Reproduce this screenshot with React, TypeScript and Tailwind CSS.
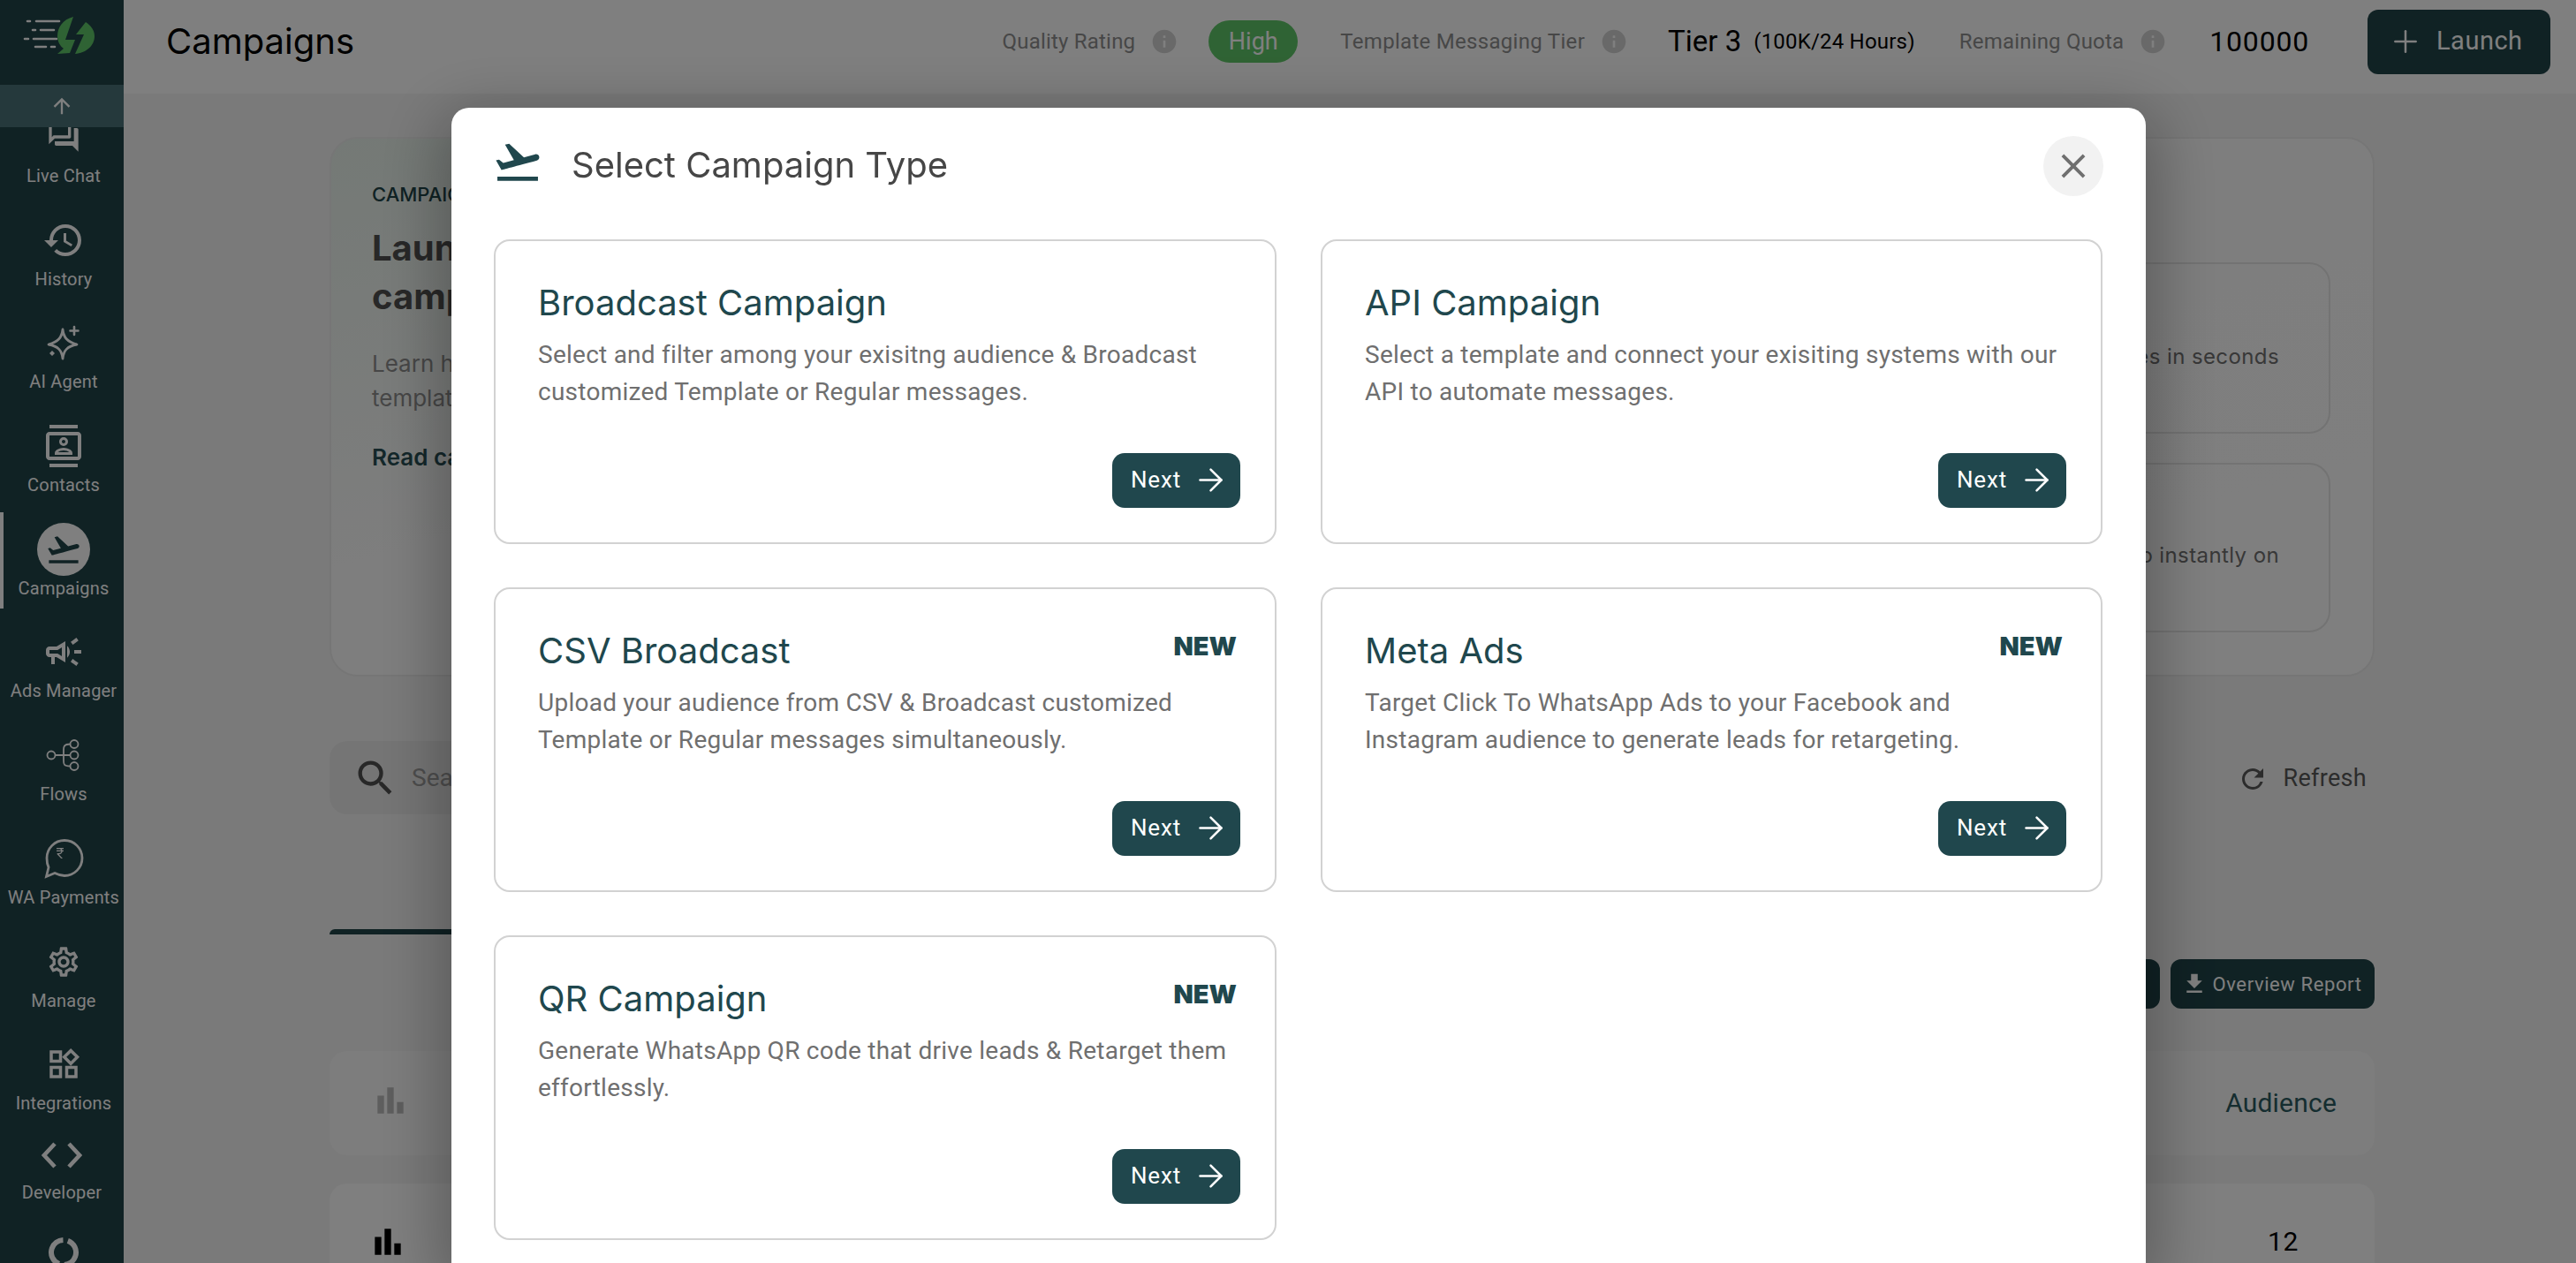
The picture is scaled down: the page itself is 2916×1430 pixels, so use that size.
import type { ReactNode } from 'react';
import { ArrowRight, Plus } from 'lucide-react';
import {
  MdArrowUpward,
  MdBarChart,
  MdClose,
  MdCurrencyRupee,
  MdFileDownload,
  MdFlightTakeoff,
  MdHistory,
  MdInfo,
  MdOutlineCampaign,
  MdOutlineContacts,
  MdOutlineForum,
  MdOutlineSettings,
  MdOutlineWidgets,
  MdRefresh,
  MdSearch,
} from 'react-icons/md';

const roboto = "font-['Roboto',sans-serif]";
const inter = "font-['Inter',sans-serif]";

function Logo() {
  return (
    <svg width="140" height="96" viewBox="0 0 140 96" fill="none" aria-hidden>
      <g stroke="#fff" strokeWidth="2.6" strokeLinecap="round">
        <path d="M31 24h3M41 24h26" />
        <path d="M37 34h3M46 34h15" />
        <path d="M28 44h4M38 44h26" />
        <path d="M40 53h12M58 53h4" />
      </g>
      <path
        d="M83 19C71 22 65 31 65 41C65 47 68 52 72 55L65 61L79 60L85 45L74 45Z"
        fill="#5fc768"
      />
      <path d="M97 25C103 29 107 34 107 41C107 52 97 60 85 61L95 39L86 39Z" fill="#5fc768" />
    </svg>
  );
}

function SparkIcon() {
  return (
    <svg width="40" height="40" viewBox="0 0 40 40" fill="none" aria-hidden>
      <path
        d="M19 5C20 14 24 19 35 22C24 24 20 29 19 38C18 29 14 24 3 22C14 19 18 14 19 5Z"
        stroke="#fff"
        strokeWidth="2.8"
        strokeLinejoin="round"
      />
      <path d="M32 2v9M27.5 6.5h9" stroke="#fff" strokeWidth="2.6" strokeLinecap="round" />
      <path d="M7 29l3 3-3 3-3-3z" fill="#fff" />
    </svg>
  );
}

function FlowIcon() {
  return (
    <svg width="40" height="40" viewBox="0 0 40 40" fill="none" stroke="#fff" strokeWidth="1.8" aria-hidden>
      <circle cx="6" cy="20" r="4.5" />
      <circle cx="32" cy="7.5" r="4.5" />
      <circle cx="32" cy="20" r="4.5" />
      <circle cx="32" cy="32.5" r="4.5" />
      <path d="M10.5 20H27.5M27.5 7.5C20 7.5 20 11 20 14V26C20 30 20 32.5 27.5 32.5" />
    </svg>
  );
}

function PaymentIcon() {
  return (
    <svg width="46" height="46" viewBox="0 0 46 46" fill="none" aria-hidden>
      <path
        d="M24 2.5C35 2.5 44 11.5 44 22.5C44 33.5 35 42.5 24 42.5C19.5 42.5 16 41 13 39.5L3.5 43.5L6 33C4.5 30 4 26.5 4 22.5C4 11.5 13 2.5 24 2.5Z"
        stroke="#fff"
        strokeWidth="2.8"
      />
      <MdCurrencyRupee x="11" y="9" width="26" height="26" color="#fff" />
    </svg>
  );
}

function CodeIcon() {
  return (
    <svg width="46" height="30" viewBox="0 0 46 30" fill="none" stroke="#fff" strokeWidth="4.6" aria-hidden>
      <path d="M15 2L3 15L15 28" />
      <path d="M31 2L43 15L31 28" />
    </svg>
  );
}

function RingIcon() {
  return (
    <svg width="36" height="36" viewBox="0 0 36 36" fill="none" aria-hidden>
      <circle cx="18" cy="18" r="14" stroke="#fff" strokeWidth="6" strokeDasharray="38 6 38 6" transform="rotate(-70 18 18)" />
    </svg>
  );
}

type NavEntry = {
  label?: string;
  icon: ReactNode;
  active?: boolean;
  box: string;
  slot?: string;
};

const navItems: NavEntry[] = [
  { label: 'Live Chat', icon: <MdOutlineForum size={40} />, box: 'h-[109px]' },
  { label: 'History', icon: <MdHistory size={48} />, box: 'h-[109px]' },
  { label: 'AI Agent', icon: <SparkIcon />, box: 'h-[109px]' },
  { label: 'Contacts', icon: <MdOutlineContacts size={48} />, box: 'h-[109px]' },
  {
    label: 'Campaigns',
    active: true,
    box: 'h-[109px]',
    icon: (
      <span className="flex h-[60px] w-[60px] items-center justify-center rounded-full bg-white text-[#204449]">
        <MdFlightTakeoff size={42} />
      </span>
    ),
  },
  { label: 'Ads Manager', icon: <MdOutlineCampaign size={48} />, box: 'h-[109px]' },
  { label: 'Flows', icon: <FlowIcon />, box: 'h-[109px]' },
  { label: 'WA Payments', icon: <PaymentIcon />, box: 'h-[109px]' },
  { label: 'Manage', icon: <MdOutlineSettings size={40} />, box: 'h-[109px]' },
  { label: 'Integrations', icon: <MdOutlineWidgets size={42} />, box: 'h-[109px]' },
  { label: 'Developer', icon: <CodeIcon />, box: 'h-[100px] -mt-3 pr-1', slot: 'h-[56px]' },
  { icon: <RingIcon />, box: 'h-[109px]' },
];

function Sidebar() {
  return (
    <aside className="flex h-full w-[140px] shrink-0 flex-col overflow-hidden bg-[#204449] text-white">
      <div className="h-[96px] shrink-0">
        <Logo />
      </div>
      <div className="relative min-h-0 flex-1 overflow-hidden">
        <nav className="flex flex-col gap-[7.7px] pt-[17px]">
          {navItems.map((item, i) => (
            <div key={i} className={`relative flex shrink-0 flex-col items-center pl-1 pt-3 ${item.box}`}>
              {item.active && <span className="absolute left-0 top-0 h-full w-1 bg-white" />}
              <div className={`flex items-center justify-center ${item.slot ?? 'h-[60px]'}`}>{item.icon}</div>
              {item.label && (
                <span className={`${roboto} whitespace-nowrap text-[20px] leading-[28px] tracking-[0.2px] text-white`}>
                  {item.label}
                </span>
              )}
            </div>
          ))}
        </nav>
        <div className="absolute left-0 top-0 flex h-[48px] w-full items-center justify-center bg-[#4a7278]">
          <MdArrowUpward size={28} />
        </div>
      </div>
    </aside>
  );
}

function InfoDot({ className }: { className: string }) {
  return (
    <span className={`flex shrink-0 text-[#d2d2d2] ${className}`}>
      <MdInfo size={32} />
    </span>
  );
}

function TopBar() {
  return (
    <header className={`${roboto} flex h-[106px] shrink-0 items-center bg-white pb-[12px] pl-[48px] pr-[29px]`}>
      <h1 className={`${inter} text-[40px] font-normal leading-none text-black`}>Campaigns</h1>
      <div className="ml-auto flex items-center">
        <span className="text-[24px] tracking-[0.2px] text-[#8e8e8e]">Quality Rating</span>
        <InfoDot className="ml-[17px]" />
        <span className="ml-[34px] flex h-[48px] w-[101px] items-center justify-center rounded-full bg-[#5fc768] text-[27px] text-white">
          High
        </span>
        <span className="ml-[48px] text-[24px] tracking-[0.3px] text-[#8e8e8e]">Template Messaging Tier</span>
        <InfoDot className="ml-[17px]" />
        <span className="ml-[45px] text-[33px] text-black">Tier 3</span>
        <span className="ml-[14px] text-[24px] tracking-[0.2px] text-black">(100K/24 Hours)</span>
        <span className="ml-[50px] text-[24px] tracking-[0.2px] text-[#8e8e8e]">Remaining Quota</span>
        <InfoDot className="ml-[17px]" />
        <span className="ml-[48px] text-[32px] tracking-[0.8px] text-black">100000</span>
        <button className="ml-[66px] flex h-[73px] w-[207px] items-center gap-[15px] rounded-[12px] bg-[#204449] pl-[23px] text-[29px] tracking-[0.5px] text-white">
          <Plus size={40} strokeWidth={1.5} />
          Launch
        </button>
      </div>
    </header>
  );
}

function PageBody() {
  return (
    <div className="flex min-h-0 flex-1 flex-col overflow-hidden bg-[#f5f5f5] pl-[233px] pr-[228px] pt-[49px]">
      <section className="flex h-[611px] shrink-0 justify-between rounded-[32px] border-2 border-[#ececec] bg-gradient-to-br from-[#e9f3ec] via-[#fcfcfc] via-40% to-white pl-[46px] pr-[48px] pt-[48px]">
        <div className={`${inter} w-[420px]`}>
          <p className="text-[22px] font-medium leading-[30px] text-[#204449]">CAMPAIGNS</p>
          <h2 className="mt-[18px] text-[40px] font-bold leading-[55px] text-[#505050]">Launch your first campaign</h2>
          <p className="mt-[29px] text-[26px] leading-[39px] text-[#8e8e8e]">Learn how to send approved templates</p>
          <p className="mt-[28px] text-[26px] font-semibold text-[#284f55]">Read campaign guide</p>
        </div>
        <div className={`${inter} flex w-[1000px] flex-col gap-[33px] pt-[92px] text-[24px] tracking-[0.4px] text-[#707070]`}>
          <div className="flex h-[194px] justify-end rounded-[24px] border-2 border-[#e6e6e6] pr-[56px] pt-[87px] leading-[36px]">
            Send messages in seconds
          </div>
          <div className="flex h-[192px] justify-end rounded-[24px] border-2 border-[#e6e6e6] pr-[56px] pt-[85px] leading-[36px]">
            Launch campaigns to instantly on
          </div>
        </div>
      </section>

      <div className="mt-[73px] flex h-[83px] shrink-0 items-center justify-between">
        <div className={`${roboto} flex h-full w-[800px] items-center rounded-[20px] bg-[#ebebeb] pl-[26px] text-[28px] text-[#9c9c9c]`}>
          <MdSearch size={52} className="text-[#505050]" />
          <span className="ml-[15px]">Search</span>
        </div>
        <button className={`${roboto} mt-[2px] flex items-center gap-[17px] pr-[9px] text-[27px] tracking-[0.3px] text-[#585858]`}>
          <MdRefresh size={36} />
          Refresh
        </button>
      </div>

      <div className="mt-[130px] h-[6px] w-[400px] shrink-0 rounded-tl-[6px] bg-[#204449]" />

      <div className="mt-[28px] flex h-[56px] shrink-0 justify-end gap-[12px]">
        <button className={`${roboto} flex h-full w-[231px] items-center justify-center rounded-[12px] bg-[#204449] text-[22px] tracking-[0.6px] text-white`}>
          Export
        </button>
        <button className={`${roboto} flex h-full w-[231px] items-center justify-center gap-[6px] rounded-[12px] bg-[#204449] pr-[3px] text-[22px] tracking-[0.6px] text-white`}>
          <MdFileDownload size={30} />
          Overview Report
        </button>
      </div>

      <div className="mt-[48px] flex h-[118px] shrink-0 items-center justify-between rounded-[20px] bg-[#fafafa] pb-[2px] pl-[47px] pr-[43px]">
        <MdBarChart size={44} className="mb-[5px] text-[#bcbcbc]" />
        <span className={`${roboto} text-[30px] tracking-[0.2px] text-[#2b5b60]`}>Audience</span>
      </div>
      <div className="mt-[32px] flex h-[118px] shrink-0 justify-between rounded-[20px] bg-white pl-[44px] pr-[86px] pt-[44px]">
        <MdBarChart size={44} className="text-black" />
        <span className={`${roboto} text-[30px] leading-[44px] tracking-[0.6px] text-black`}>12</span>
      </div>
    </div>
  );
}

type CampaignType = { title: string; lines: string[]; isNew?: boolean };

const campaignTypes: CampaignType[] = [
  {
    title: 'Broadcast Campaign',
    lines: ['Select and filter among your exisitng audience & Broadcast', 'customized Template or Regular messages.'],
  },
  {
    title: 'API Campaign',
    lines: ['Select a template and connect your exisiting systems with our', 'API to automate messages.'],
  },
  {
    title: 'CSV Broadcast',
    isNew: true,
    lines: ['Upload your audience from CSV & Broadcast customized', 'Template or Regular messages simultaneously.'],
  },
  {
    title: 'Meta Ads',
    isNew: true,
    lines: ['Target Click To WhatsApp Ads to your Facebook and', 'Instagram audience to generate leads for retargeting.'],
  },
  {
    title: 'QR Campaign',
    isNew: true,
    lines: ['Generate WhatsApp QR code that drive leads & Retarget them', 'effortlessly.'],
  },
];

function TypeCard({ title, lines, isNew }: CampaignType) {
  return (
    <div className="flex flex-col rounded-[18px] border-2 border-[#d2d2d2] bg-white pb-[39px] pl-[48px] pr-[39px] pt-[46px]">
      <div className="flex items-start justify-between pr-[4px]">
        <h3 className={`${inter} text-[40px] font-normal leading-[48px] text-[#20474d]`}>{title}</h3>
        {isNew && <span className={`${inter} mt-[6px] text-[29px] font-black leading-[26px] text-[#20474d]`}>NEW</span>}
      </div>
      <div className={`${roboto} mt-[14px] text-[28px] leading-[42px] tracking-[0.25px] text-[#6f6f6f]`}>
        {lines.map((line) => (
          <p key={line} className="whitespace-nowrap">
            {line}
          </p>
        ))}
      </div>
      <button className={`${roboto} mt-auto flex h-[62px] w-[145px] items-center gap-[13px] self-end rounded-[14px] bg-[#20474d] pb-[1px] pl-[21px] text-[26px] tracking-[0.8px] text-white`}>
        Next
        <ArrowRight size={41} strokeWidth={1.5} />
      </button>
    </div>
  );
}

function CampaignModal() {
  return (
    <div className="fixed inset-0 flex items-start overflow-hidden bg-black/50 pl-[511px] pt-[122px]">
      <div className="h-[1308px] w-[1918px] rounded-t-[20px] bg-white pl-[48px] pr-[49px] shadow-[0_20px_70px_14px_rgba(0,0,0,0.28)]">
        <div className="flex h-[132px] items-center">
          <MdFlightTakeoff size={58} className="mb-[10px] -ml-[2px] text-[#20474d]" />
          <h2 className={`${inter} mb-[2px] ml-[32px] text-[40px] font-normal leading-none text-[#464646]`}>Select Campaign Type</h2>
          <button className="-mr-[1px] ml-auto flex h-[68px] w-[68px] items-center justify-center rounded-full bg-[#f2f2f2] text-[#6f6f6f]">
            <MdClose size={46} />
          </button>
        </div>
        <div className="mt-[17px] grid grid-cols-[886px_885px] auto-rows-[345px] gap-x-[50px] gap-y-[49px]">
          {campaignTypes.map((type) => (
            <TypeCard key={type.title} {...type} />
          ))}
        </div>
      </div>
    </div>
  );
}

export default function App() {
  return (
    <div className="flex h-screen w-screen overflow-hidden bg-white">
      <Sidebar />
      <main className="flex min-w-0 flex-1 flex-col">
        <TopBar />
        <PageBody />
      </main>
      <CampaignModal />
    </div>
  );
}
